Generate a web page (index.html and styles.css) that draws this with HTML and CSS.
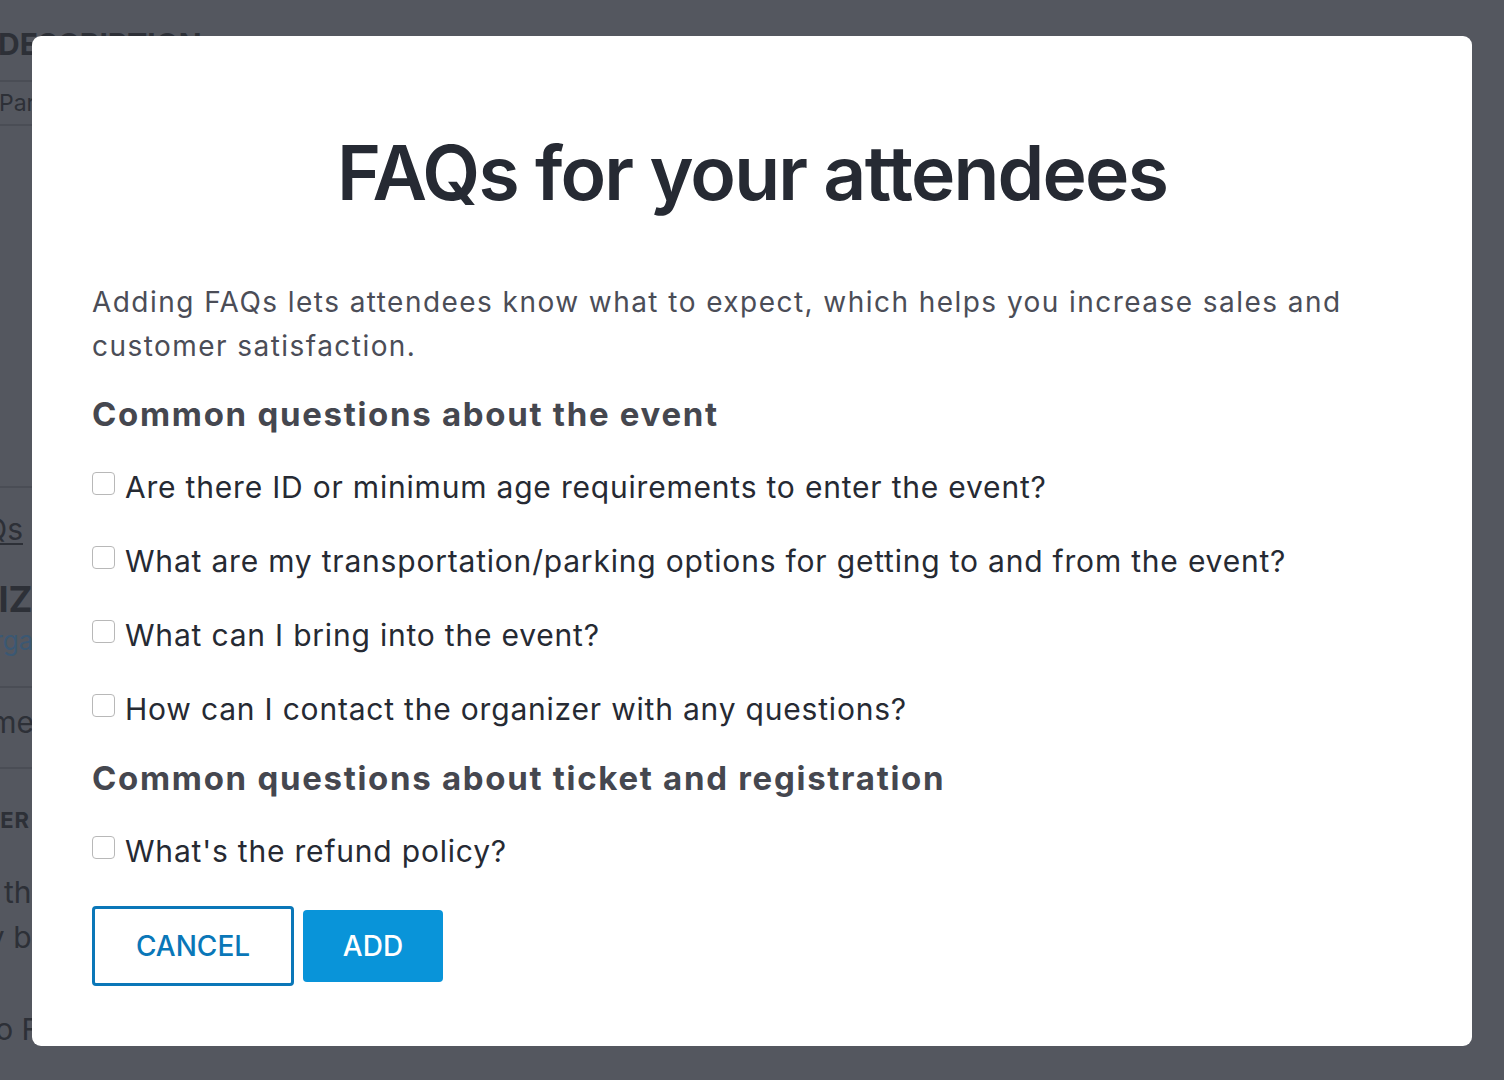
FILE: index.html
```html
<!DOCTYPE html>
<html>
<head lang="en">
    <meta charset="UTF-8">
    <title>FAQs for your attendees</title>
    <link rel="stylesheet" href="styles.css">
</head>
<body>
<div id="page">
    <div class="bg-line bg-title">DESCRIPTION</div>
    <div class="bg-rule r1"></div>
    <div class="bg-line bg-para">Paragraph</div>
    <div class="bg-rule r2"></div>
    <div class="bg-rule r3"></div>
    <div class="bg-line bg-link">Add FAQs</div>
    <div class="bg-line bg-caps">ORGANIZER</div>
    <div class="bg-line bg-blue">Add organizer</div>
    <div class="bg-rule r4"></div>
    <div class="bg-line bg-name">Organizer name</div>
    <div class="bg-rule r5"></div>
    <div class="bg-line bg-order">ORDER</div>
    <div class="bg-line bg-the">with the</div>
    <div class="bg-line bg-by">may be</div>
    <div class="bg-line bg-go">Go to FAQs</div>
</div>

<div id="overlay">
    <div id="modal">
        <h1>FAQs for your attendees</h1>
        <p class="intro">Adding FAQs lets attendees know what to expect, which helps you increase sales and customer satisfaction.</p>

        <h2>Common questions about the event</h2>
        <ul class="questions">
            <li><label><input type="checkbox"><span>Are there ID or minimum age requirements to enter the event?</span></label></li>
            <li><label><input type="checkbox"><span>What are my transportation/parking options for getting to and from the event?</span></label></li>
            <li><label><input type="checkbox"><span>What can I bring into the event?</span></label></li>
            <li><label><input type="checkbox"><span>How can I contact the organizer with any questions?</span></label></li>
        </ul>

        <h2 class="second">Common questions about ticket and registration</h2>
        <ul class="questions">
            <li><label><input type="checkbox"><span>What's the refund policy?</span></label></li>
        </ul>

        <div class="buttons">
            <button class="btn cancel">CANCEL</button>
            <button class="btn add">ADD</button>
        </div>
    </div>
</div>
</body>
</html>
```

FILE: styles.css
```css
*{
    margin: 0;
    padding: 0;
    box-sizing: border-box;
}
html, body{
    height: 100%;
}
body{
    background: #54575f;
    font-family: Inter, "Liberation Sans", sans-serif;
    overflow: hidden;
    position: relative;
}
li{
    list-style: none;
}

/* page behind the overlay */
#page{
    width: 600px;
    margin-left: -400px;
    padding-top: 29px;
    color: #2d3037;
}
.bg-line{
    white-space: nowrap;
    text-align: right;
    font-size: 30px;
    line-height: 30px;
    height: 30px;
}
.bg-rule{
    height: 2px;
    background: #4a4d55;
}
.bg-title{
    text-align: left;
    padding-left: 398px;
    font-weight: 700;
}
.r1{ margin-top: 21px; }
.bg-para{
    text-align: left;
    padding-left: 399px;
    font-size: 23px;
    line-height: 23px;
    height: 23px;
    margin-top: 10px;
}
.r2{ margin-top: 9px; }
.r3{ margin-top: 360px; }
.bg-link{
    width: 423px;
    margin-top: 26px;
    text-decoration: underline;
    text-underline-offset: 3px;
    text-decoration-thickness: 2px;
}
.bg-caps{
    width: 478px;
    font-size: 36px;
    line-height: 36px;
    height: 36px;
    font-weight: 700;
    margin-top: 37px;
}
.bg-blue{
    width: 494px;
    color: #3b5873;
    font-size: 26px;
    line-height: 26px;
    height: 26px;
    margin-top: 11px;
}
.r4{ margin-top: 32px; }
.bg-name{
    width: 434px;
    margin-top: 19px;
}
.r5{ margin-top: 30px; }
.bg-order{
    width: 430px;
    font-size: 22px;
    line-height: 22px;
    height: 22px;
    font-weight: 700;
    letter-spacing: 1px;
    margin-top: 40px;
}
.bg-the{
    width: 449px;
    margin-top: 46px;
}
.bg-by{
    width: 449px;
    margin-top: 15px;
}
.bg-go{
    width: 495px;
    margin-top: 62px;
}

/* dialog */
#overlay{
    position: absolute;
    left: 0;
    top: 0;
    right: 0;
    bottom: 0;
    padding: 36px 32px 0 32px;
}
#modal{
    background: #ffffff;
    border-radius: 9px;
    height: 1010px;
    padding: 98px 60px 0 60px;
    color: #262a33;
}
h1{
    font-size: 75px;
    font-weight: 600;
    letter-spacing: -1.8px;
    text-align: center;
    line-height: 77px;
    color: #262a33;
}
.intro{
    margin-top: 69px;
    font-size: 28px;
    line-height: 44px;
    letter-spacing: 1.45px;
    color: #4b4d57;
}
h2{
    font-size: 33px;
    font-weight: 700;
    letter-spacing: 1.7px;
    color: #45474f;
    line-height: 44px;
    margin-top: 24px;
}
h2.second{
    margin-top: 27px;
}
.questions{
    margin-top: 31px;
}
.questions li + li{
    margin-top: 34px;
}
.questions label{
    display: flex;
    align-items: flex-start;
    font-size: 30px;
    line-height: 40px;
    height: 40px;
    letter-spacing: 0.8px;
}
.questions input{
    -webkit-appearance: none;
    appearance: none;
    width: 23px;
    height: 23px;
    border: 1px solid #b8b8b8;
    border-radius: 4px;
    background: #fff;
    margin: 5px 10px 0 0;
    flex: none;
}
.buttons{
    display: flex;
    align-items: center;
    gap: 9px;
    margin-top: 35px;
}
.btn{
    font-family: Inter, "Liberation Sans", sans-serif;
    font-size: 28px;
    font-weight: 500;
    border-radius: 4px;
    cursor: pointer;
}
.cancel{
    width: 202px;
    height: 80px;
    border: 3px solid #0a77b8;
    background: #fff;
    color: #0a77b8;
}
.add{
    width: 140px;
    height: 72px;
    border: none;
    background: #0994d9;
    color: #fff;
}
```
